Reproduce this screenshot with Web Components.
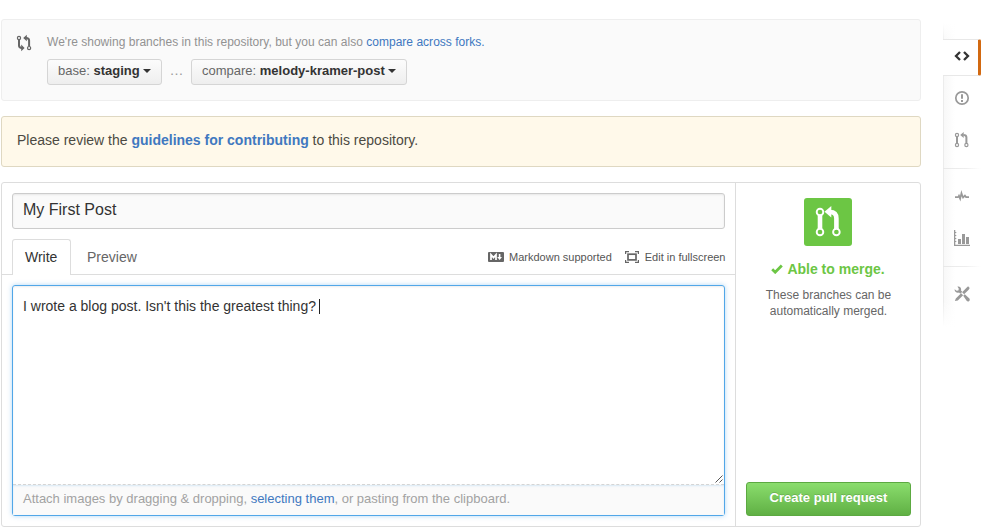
<!DOCTYPE html>
<html lang="en">
<head>
<meta charset="utf-8">
<title>Open a pull request</title>
<style>
html, body { margin: 0; background: #fff; }
body { width: 993px; height: 530px; overflow: hidden; font-family: "Liberation Sans", Arial, sans-serif; font-size: 13px; line-height: 16px; color: #333; }
</style>
</head>
<body>
<pull-page></pull-page>
<script>
const define = (name, html, setup) => {
  const template = document.createElement('template');
  template.innerHTML = `<style>*{box-sizing:border-box}:host{display:block;box-sizing:border-box}a{color:#4078c0;text-decoration:none}span,a,b{white-space:pre}</style>${html}`;
  customElements.define(name, class extends HTMLElement {
    constructor() {
      super();
      this.attachShadow({ mode: 'open' }).append(template.content.cloneNode(true));
    }
    connectedCallback() { if (setup) setup(this, this.shadowRoot); }
  });
};

const icons = {
  compare: [16, 18, '<g fill="none" stroke="currentColor"><circle cx="3" cy="4" r="1.6" stroke-width="1.2"/><circle cx="13.1" cy="14.1" r="1.6" stroke-width="1.2"/><path d="M3 5.8v5.7q0 2.4 3 2.4M13.1 12.3V6.4q0-2.5-3-2.5" stroke-width="2"/></g><path d="M5.2 10.6v6.6l3.4-3.3zM10.8.7v6.5L7.2 3.9z" fill="currentColor"/>'],
  pull: [16, 18, '<g fill="none" stroke="currentColor"><circle cx="3" cy="4" r="1.6" stroke-width="1.2"/><circle cx="3" cy="14" r="1.6" stroke-width="1.2"/><circle cx="12.4" cy="14" r="1.6" stroke-width="1.2"/><path d="M3 5.7v6.6M12.4 12.3V6.3q0-2.4-3-2.4" stroke-width="2"/></g><path d="M9.7.9v6L6.2 3.9z" fill="currentColor"/>'],
  pullBig: [48, 48, '<g fill="none" stroke="#fff"><path d="M16 17v14M32.400 31V20.500q0-6.500-6.400-6.500" stroke-width="4.600"/></g><path d="M27.300 8v11.500L20.500 13.700z" fill="#fff"/><g fill="#6cc644" stroke="#fff" stroke-width="1.900"><circle cx="16" cy="14" r="3.300"/><circle cx="16" cy="34" r="3.300"/><circle cx="32.400" cy="34" r="3.300"/></g>'],
  code: [16, 16, '<path d="M6 4L2 8l4 4M10 4l4 4-4 4" fill="none" stroke="currentColor" stroke-width="2.300"/>'],
  issue: [16, 16, '<circle cx="8" cy="8" r="6.200" fill="none" stroke="currentColor" stroke-width="1.700"/><path d="M7 4.200h2v4.600H7zM7 10h2v2H7z" fill="currentColor"/>'],
  pulse: [16, 16, '<path d="M1 8.200h2.800L5 5.800l1 2L7.300 2l2 6 1.700-1.700 1.500 1.900H15V10h-3.300l-.9-1.100L8.800 11 7.600 8.300 6.400 13.600 4.700 9.400 4.400 10H1z" fill="currentColor"/>'],
  graph: [16, 16, '<path d="M0 0h1.300v14.700H16V16H0zM1 2h1.300v1H1zM1 5h1.300v1H1zM1 8h1.300v1H1zM1 11h1.300v1H1zM4 9h3v5H4zM8 4h3v10H8zM12 7h3v7h-3z" fill="currentColor"/>'],
  tools: [16, 16, '<path d="M14.100.300l1.600 1.600-1 1.900-4.600 4.500-2-2 4.400-4.500zM.900 14.900l.9-2.400 5.300-5.300 2 2-5.300 5.300z" fill="currentColor"/><path d="M3.400.600C5.500-.100 7.700 1.600 7 4.500l1.300 1.300-2 2L5 6.600C2.500 7.400.200 5.600.700 3.200l1.900 1.600 1.800-.4.400-1.700zM9.200 9.800l1.600-1.600 4.600 4.400q.8 1.200-.2 2.300-1.100 1.100-2.400.2z" fill="currentColor"/>'],
  markdown: [16, 10, '<rect width="16" height="10" rx="1" fill="currentColor"/><path d="M3 8V2.700L5.500 5.600 8 2.700V8" fill="none" stroke="#fff" stroke-width="1.700"/><path d="M11.600 2v3" stroke="#fff" stroke-width="1.600"/><path d="M9.200 5h4.800L11.600 8z" fill="#fff"/>'],
  full: [14, 12, '<path d="M.6 3V.6H4M10 .6h3.400V3M13.400 9v2.400H10M4 11.400H.6V9" fill="none" stroke="currentColor" stroke-width="1.200"/><rect x="3" y="3.200" width="8" height="5.700" fill="none" stroke="currentColor" stroke-width="1.700"/>'],
  check: [12, 10, '<path d="M1.200 5.300l3 2.900L10.800 1.600" fill="none" stroke="currentColor" stroke-width="2.800"/>'],
  caret: [8, 4, '<path d="M0 0h8L4 4z" fill="currentColor"/>'],
  grip: [8, 8, '<path d="M.5 7.500l7-7M4.500 7.500l3-3" stroke="#555" stroke-width="1"/>']
};
define('oct-icon', '<style>:host{flex:none;line-height:0}svg{display:block}</style><div></div>', (el, root) => {
  const [w, h, body] = icons[el.getAttribute('name')];
  root.querySelector('div').innerHTML = `<svg width="${w}" height="${h}" viewBox="0 0 ${w} ${h}">${body}</svg>`;
});

define('branch-button', `<style>
:host{display:flex;align-items:center;height:26px;padding:0 10px 2px;border:1px solid #d5d5d5;border-radius:3px;background:linear-gradient(#fcfcfc,#eee);color:#666;white-space:pre}
oct-icon{color:#333;margin-left:3px}
</style><slot></slot><oct-icon name="caret"></oct-icon>`);

define('compare-bar', `<style>
:host{height:82px;border:1px solid #eee;border-radius:3px;background:#fafafa;padding:14px 14px;display:flex;gap:15px;color:#999}
.row{display:flex;margin-top:9px;align-items:center}
.intro{font-size:12px;letter-spacing:.02px;color:#929292}
branch-button:first-of-type{width:115px}branch-button:last-of-type{width:216px}
.dots{width:29px;text-align:center;font-size:14px;margin-top:-4px}
.row b{color:#333}
</style><oct-icon name="compare" style="color:#666"></oct-icon><div><div><span class="intro">We're showing branches in this repository, but you can also <a>compare across forks.</a></span></div>
<div class="row"><branch-button><span>base: <b>staging</b></span></branch-button><span class="dots">…</span><branch-button><span>compare: <b>melody-kramer-post</b></span></branch-button></div></div>`);

define('guide-notice', `<style>
:host{height:51px;border:1px solid #dfd8c2;border-radius:3px;background:#fff9ea;padding:15px;font-size:14px;color:#4c4a42}
a{font-weight:bold}
</style><span>Please review the <a>guidelines for contributing</a> to this repository.</span>`);

define('write-tabs', `<style>
:host{display:flex;height:36px;border-bottom:1px solid #ddd;padding:0 10px;font-size:14px;color:#666}
.on{width:59px;height:36px;border:1px solid #ddd;border-bottom:0;border-radius:3px 3px 0 0;background:#fff;color:#333;padding:9px 0 0 12px}
.off{padding:10px 0 0 16px}
.help{margin-left:auto;display:flex;align-items:center;font-size:11px;color:#555;padding-top:1px}
oct-icon{margin-right:5px;color:#666}.fs{margin-left:14px}
.help span{position:relative;left:.5px}
</style><div class="on"><span>Write</span></div><div class="off"><span>Preview</span></div>
<div class="help"><oct-icon name="markdown"></oct-icon><span>Markdown supported</span><oct-icon class="fs" name="full"></oct-icon><span>Edit in fullscreen</span></div>`);

define('comment-box', `<style>
:host{height:231px;margin:10px 10px 0;border:1px solid #51a7e8;border-radius:3px;box-shadow:inset 0 1px 2px rgba(0,0,0,.075),0 0 5px rgba(81,167,232,.45);display:flex;flex-direction:column}
.text{flex:1;padding:12px 10px;font-size:14px;display:flex;position:relative}
.caret{width:1px;height:15px;background:#222;margin:1px 0 0 3px}
oct-icon{position:absolute;right:1px;bottom:1px}
.drop{height:31px;border-top:1px dashed #d5d5d5;background:#fafafa;color:#a2a2a2;padding:6px 10px;box-shadow:inset 0 1px 2px rgba(81,167,232,.2)}
</style><div class="text"><span>I wrote a blog post. Isn't this the greatest thing?</span><i class="caret"></i><oct-icon name="grip"></oct-icon></div>
<div class="drop"><span>Attach images by dragging &amp; dropping, <a>selecting them</a>, or pasting from the clipboard.</span></div>`);

define('merge-status', `<style>
:host{width:185px;border-left:1px solid #ddd;padding:15px 9px 10px 10px;display:flex;flex-direction:column;align-items:center;color:#666;text-align:center;font-size:12px}
.badge{width:48px;height:48px;border-radius:3px;background:#6cc644;margin-right:2px}
.able{display:flex;align-items:center;color:#6cc644;font-size:14px;margin:15px 1px 10px 0}
.able oct-icon{margin-right:4px}
.go{margin-top:auto;width:165px;height:34px;border:1px solid #5ca941;border-radius:3px;background:linear-gradient(#8add6d,#60b044);color:#fff;font-size:13px;line-height:29px;text-shadow:0 -1px 0 rgba(0,0,0,.15)}
</style><div class="badge"><oct-icon name="pullBig"></oct-icon></div>
<div class="able"><oct-icon name="check"></oct-icon><b>Able to merge.</b></div>
<span>These branches can be</span><span>automatically merged.</span>
<div class="go"><b>Create pull request</b></div>`);

define('pull-form', `<style>
:host{height:345px;border:1px solid #ddd;border-radius:3px;display:flex;background:#fff}
.main{flex:1;min-width:0}
.title{height:36px;margin:10px 10px;border:1px solid #ccc;border-radius:3px;background:#fafafa;box-shadow:inset 0 1px 2px rgba(0,0,0,.075);padding:7px 10px;font-size:16px;line-height:18px}
</style><div class="main"><div class="title"><span>My First Post</span></div><write-tabs></write-tabs><comment-box></comment-box></div><merge-status></merge-status>`);

define('repo-nav', `<style>
:host{width:38px;height:304px;color:#999;display:flex;flex-direction:column;
background:linear-gradient(#fff,transparent 22px,transparent 278px,#fff),linear-gradient(90deg,#ececec 0,#ececec 1px,#f8f8f8 1px,#fff 12px)}
.item{display:flex;align-items:center;justify-content:center;height:42px;margin-right:1px}
.on{height:37px;margin:16px 0 0;background:#fff;color:#333;border:solid #e8e8e8;border-width:1px 0;border-right:3px solid #d26911;border-radius:0 2px 2px 0;padding:0 0 3px 2px}
.rule{height:1px;background:linear-gradient(90deg,#e8e8e8,#eee 60%,#fff)}
</style><div class="item on"><oct-icon name="code"></oct-icon></div>
<div class="item" style="height:44px"><oct-icon name="issue"></oct-icon></div>
<div class="item" style="height:39px"><oct-icon name="pull"></oct-icon></div><div class="rule" style="margin-top:9px"></div>
<div class="item" style="height:53px"><oct-icon name="pulse"></oct-icon></div>
<div class="item" style="height:31px"><oct-icon name="graph"></oct-icon></div><div class="rule" style="margin-top:13px"></div>
<div class="item" style="height:54px"><oct-icon name="tools"></oct-icon></div>`);

define('pull-page', `<style>
:host{display:flex;padding:19px 0 0 1px;gap:22px}
.col{width:920px;display:grid;gap:15px}
repo-nav{margin-top:4px}
</style><div class="col"><compare-bar></compare-bar><guide-notice></guide-notice><pull-form></pull-form></div><repo-nav></repo-nav>`);
</script>
</body>
</html>
